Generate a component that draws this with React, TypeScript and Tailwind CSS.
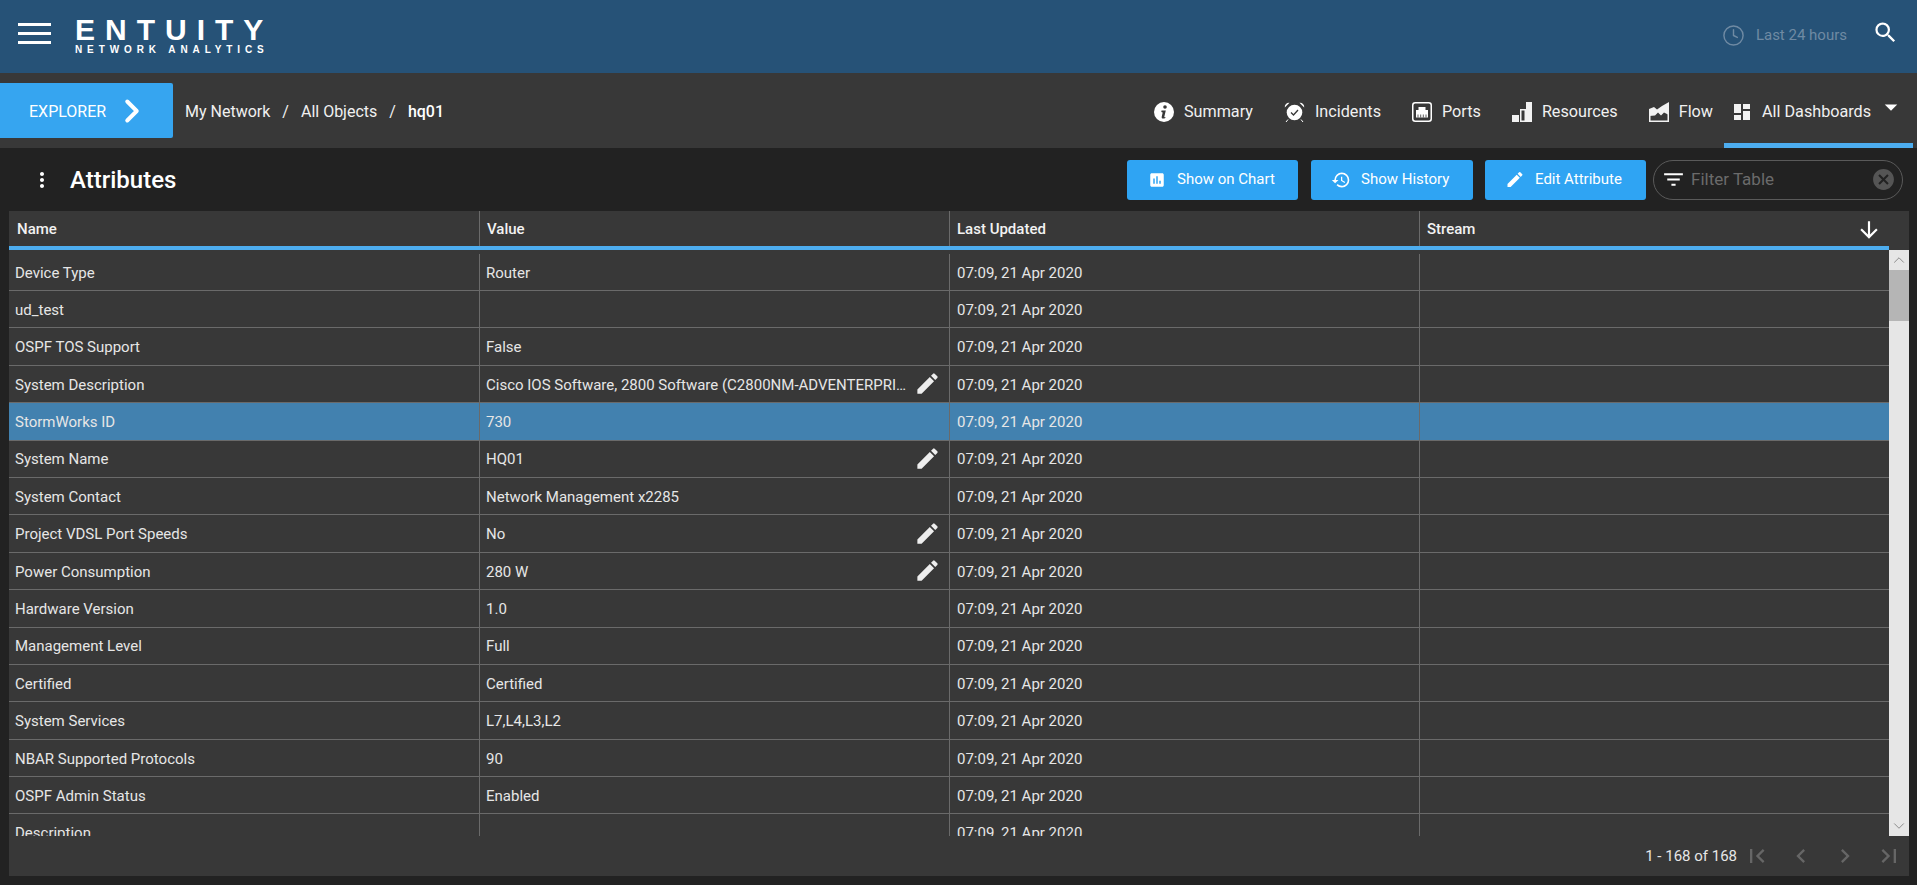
import React from 'react';
import { MdEdit, MdHistory, MdFilterList, MdCancel, MdSearch, MdArrowDownward, MdFirstPage, MdLastPage, MdChevronLeft, MdChevronRight, MdAssessment, MdArrowDropDown, MdMoreVert } from 'react-icons/md';
import { Clock, ChevronRight, ChevronUp, ChevronDown } from 'lucide-react';

const rows = [
  { name: 'Device Type', value: 'Router' },
  { name: 'ud_test', value: '' },
  { name: 'OSPF TOS Support', value: 'False' },
  { name: 'System Description', value: 'Cisco IOS Software, 2800 Software (C2800NM-ADVENTERPRISEK9-M), Version 12.4', edit: true },
  { name: 'StormWorks ID', value: '730', selected: true },
  { name: 'System Name', value: 'HQ01', edit: true },
  { name: 'System Contact', value: 'Network Management x2285' },
  { name: 'Project VDSL Port Speeds', value: 'No', edit: true },
  { name: 'Power Consumption', value: '280 W', edit: true },
  { name: 'Hardware Version', value: '1.0' },
  { name: 'Management Level', value: 'Full' },
  { name: 'Certified', value: 'Certified' },
  { name: 'System Services', value: 'L7,L4,L3,L2' },
  { name: 'NBAR Supported Protocols', value: '90' },
  { name: 'OSPF Admin Status', value: 'Enabled' },
  { name: 'Description', value: '' },
];

function InfoIcon() {
  return (
    <svg width="20" height="20" viewBox="0 0 20 20">
      <circle cx="10" cy="10" r="10" fill="#fff" />
      <circle cx="11" cy="5" r="1.8" fill="#383838" />
      <path d="M7.500 8.500h4.300l-1.500 6.300c-.1.500.3.600 1.200.2l-.2 1c-2.200 1-4 .6-3.600-1.300l1-4.300-1.400-.3z" fill="#383838" />
    </svg>
  );
}

function AlarmIcon() {
  return (
    <svg width="21" height="20" viewBox="0 0 21 20" fill="none">
      <circle cx="10.500" cy="10.500" r="7.800" fill="#fff" />
      <path d="M7 10.500l2.500 2.500 4.500-5" stroke="#383838" strokeWidth="1.300" />
      <path d="M.8 5.500A4.200 4.200 0 0 1 5.500.8zM20.200 5.500A4.200 4.200 0 0 0 15.500.8z" fill="#fff" />
      <path d="M2 20l2-2.500M19 20l-2-2.500" stroke="#fff" strokeWidth="1" />
    </svg>
  );
}

function PortIcon() {
  return (
    <svg width="20" height="20" viewBox="0 0 20 20" fill="none">
      <rect x=".75" y=".75" width="18.500" height="18.500" rx="2.500" stroke="#fff" strokeWidth="1.500" />
      <path d="M4 15.500V8h2.500V5h7v3H16v7.500z" fill="#fff" />
      <path d="M6 15.500v-3M8.700 15.500v-3M11.300 15.500v-3M14 15.500v-3" stroke="#383838" strokeWidth=".8" />
    </svg>
  );
}

function ResourceIcon() {
  return (
    <svg width="20" height="20" viewBox="0 0 20 20" fill="#f2f2f2">
      <rect x="0" y="13" width="7" height="7" />
      <path d="M8 7h6v13H8zM9.500 8.500v10h3v-10z" fillRule="evenodd" />
      <rect x="14" y="0" width="6" height="20" />
    </svg>
  );
}

function FlowIcon() {
  return (
    <svg width="20" height="20" viewBox="0 0 20 20" fill="#f2f2f2">
      <path d="M0 7l5-2 3 2.500L13 4l7-4v13l-5-2.500-3 3-3-3-3 3-6 .5z" />
      <path d="M0 7h1.500v11.500h17V12H20v8H0z" />
    </svg>
  );
}

function DashIcon() {
  return (
    <svg width="16" height="16" viewBox="0 0 16 16" fill="#f2f2f2">
      <rect x="0" y="0" width="7" height="9" />
      <rect x="9" y="0" width="7" height="5" />
      <rect x="0" y="11" width="7" height="5" />
      <rect x="9" y="7" width="7" height="9" />
    </svg>
  );
}

function Cell({ children, width, last }: { children?: React.ReactNode; width: string; last?: boolean }) {
  return (
    <div className={`flex h-full min-w-0 shrink-0 items-center pt-[2px] ${width} ${last ? '' : 'border-r border-[#6a6a6a]'}`}>
      {children}
    </div>
  );
}

function HeadCell({ children, width, last }: { children: React.ReactNode; width: string; last?: boolean }) {
  return (
    <div className={`flex h-full shrink-0 items-center pt-[2px] text-[15px] font-medium text-[#f2f2f2] ${width} ${last ? '' : 'border-r border-[#6a6a6a]'}`}>
      {children}
    </div>
  );
}

function NavLink({ icon, label }: { icon: React.ReactNode; label: string }) {
  return (
    <div className="flex items-center gap-[10px]">
      {icon}
      <span>{label}</span>
    </div>
  );
}

function BlueButton({ icon, label, width }: { icon: React.ReactNode; label: string; width: string }) {
  return (
    <button className={`flex h-[40px] items-center gap-[10px] rounded-[3px] bg-[#2fa4f3] pl-[20px] text-[15px] text-white ${width}`}>
      <span className="flex w-[20px] justify-center">{icon}</span>
      {label}
    </button>
  );
}

export default function App() {
  return (
    <div className="flex h-[885px] w-[1917px] flex-col overflow-hidden bg-[#222222] font-['Roboto',sans-serif] text-[#eeeeee]">
      <header className="flex h-[73px] shrink-0 items-start bg-[#265277] pl-[18px] pr-[18px]">
        <div className="mt-[23px] flex w-[33px] flex-col gap-[6px]">
          <span className="h-[3px] bg-white" />
          <span className="h-[3px] bg-white" />
          <span className="h-[3px] bg-white" />
        </div>
        <div className="ml-[24px] mt-[15px] flex flex-col font-['Liberation_Sans',sans-serif] font-bold text-white">
          <span className="text-[30px] leading-[30px] tracking-[10px]">ENTUITY</span>
          <span className="text-[10px] leading-[10px] tracking-[4.9px]">NETWORK ANALYTICS</span>
        </div>
        <div className="ml-auto mt-[24px] flex items-center text-[15px] text-[#6f8aa3]">
          <Clock size={23} strokeWidth={1.5} />
          <span className="ml-[11px]">Last 24 hours</span>
          <MdSearch size={27} className="-mt-[6px] ml-[25px] text-white" />
        </div>
      </header>

      <div className="flex h-[75px] shrink-0 items-center bg-[#383838]">
        <div className="flex h-[55px] w-[173px] items-center rounded-r-[2px] bg-[#36a5f0] pl-[29px] text-[16px] text-white">
          <span className="pt-[2px]">EXPLORER</span>
          <ChevronRight size={38} strokeWidth={2.5} className="ml-[7px]" />
        </div>
        <div className="ml-[12px] flex items-center gap-[12px] pt-[3px] text-[16px] text-[#f0f0f0]">
          <span>My Network</span>
          <span>/</span>
          <span>All Objects</span>
          <span>/</span>
          <span className="font-medium text-white">hq01</span>
        </div>
        <div className="ml-auto flex h-full items-center text-[16.2px] text-[#f0f0f0]">
          <div className="flex items-center gap-[31px] pt-[3px]">
            <NavLink icon={<InfoIcon />} label="Summary" />
            <NavLink icon={<AlarmIcon />} label="Incidents" />
            <NavLink icon={<PortIcon />} label="Ports" />
            <NavLink icon={<ResourceIcon />} label="Resources" />
            <NavLink icon={<FlowIcon />} label="Flow" />
          </div>
          <div className="ml-[11px] mr-[4px] flex h-full w-[189px] items-center border-b-[5px] border-[#4dadef] pl-[10px] pt-[8px]">
            <DashIcon />
            <span className="ml-[12px]">All Dashboards</span>
            <MdArrowDropDown size={30} className="-mt-[10px] ml-[5px] text-white" />
          </div>
        </div>
      </div>

      <div className="flex h-[63px] shrink-0 items-center pl-[30px] pr-[14px]">
        <MdMoreVert size={24} className="text-white" />
        <h1 className="ml-[16px] text-[24px] font-medium text-white">Attributes</h1>
        <div className="ml-auto flex items-center">
          <BlueButton width="w-[171px]" icon={<MdAssessment size={18} />} label="Show on Chart" />
          <BlueButton width="ml-[13px] w-[162px]" icon={<MdHistory size={22} />} label="Show History" />
          <BlueButton width="ml-[12px] w-[161px]" icon={<MdEdit size={21} />} label="Edit Attribute" />
          <div className="ml-[7px] flex h-[40px] w-[250px] items-center rounded-full border border-[#5a5a5a] pl-[7px] pr-[6px] text-[17px] text-[#6b6b6b]">
            <MdFilterList size={25} className="text-white" />
            <span className="ml-[5px]">Filter Table</span>
            <MdCancel size={25} className="ml-auto text-[#555555]" />
          </div>
        </div>
      </div>

      <main className="ml-[9px] flex h-[665px] w-[1900px] shrink-0 flex-col bg-[#383838]">
        <div className="flex h-[35px] shrink-0">
          <HeadCell width="w-[471px] pl-[8px]">Name</HeadCell>
          <HeadCell width="w-[470px] pl-[7px]">Value</HeadCell>
          <HeadCell width="w-[470px] pl-[7px]">Last Updated</HeadCell>
          <HeadCell width="w-[489px] pl-[7px] pr-[27px]" last>
            <span className="flex-1">Stream</span>
            <MdArrowDownward size={26} className="text-white" />
          </HeadCell>
        </div>
        <div className="h-[4px] w-[1880px] shrink-0 bg-[#4dadef]" />
        <div className="flex min-h-0 flex-1">
          <div className="h-[586px] w-[1880px] overflow-hidden pt-[3.6px]">
            {rows.map((row) => (
              <div
                key={row.name}
                className={`flex h-[37.4px] border-b-[1.5px] border-[#6a6a6a] text-[15px] text-[#e6e6e6] ${row.selected ? 'bg-[#4281af]' : ''}`}
              >
                <Cell width="w-[471px] pl-[6px]">{row.name}</Cell>
                <Cell width="w-[470px] pl-[6px]">
                  <span className="min-w-0 flex-1 truncate">{row.value}</span>
                  {row.edit && <MdEdit size={27} className="-mt-[2px] ml-[6px] mr-[8px] shrink-0 text-[#eeeeee]" />}
                </Cell>
                <Cell width="w-[470px] pl-[7px]">07:09, 21 Apr 2020</Cell>
                <Cell width="w-[469px]" last />
              </div>
            ))}
          </div>
          <div className="flex h-[586px] w-[20px] flex-col bg-[#e6e6e6] text-[#8a8a8a]">
            <div className="flex h-[20px] shrink-0 items-center justify-center">
              <ChevronUp size={18} strokeWidth={1.3} />
            </div>
            <div className="h-[51px] shrink-0 bg-[#b5b5b5]" />
            <div className="mt-auto flex h-[20px] shrink-0 items-center justify-center">
              <ChevronDown size={18} strokeWidth={1.3} />
            </div>
          </div>
        </div>
        <div className="flex h-[40px] shrink-0 items-center justify-end pr-[6px] text-[15px] text-[#e6e6e6]">
          <span>1 - 168 of 168</span>
          <div className="ml-[6px] flex items-center gap-[16px] text-[#666666]">
            <MdFirstPage size={28} />
            <MdChevronLeft size={28} />
            <MdChevronRight size={28} />
            <MdLastPage size={28} />
          </div>
        </div>
      </main>
    </div>
  );
}
